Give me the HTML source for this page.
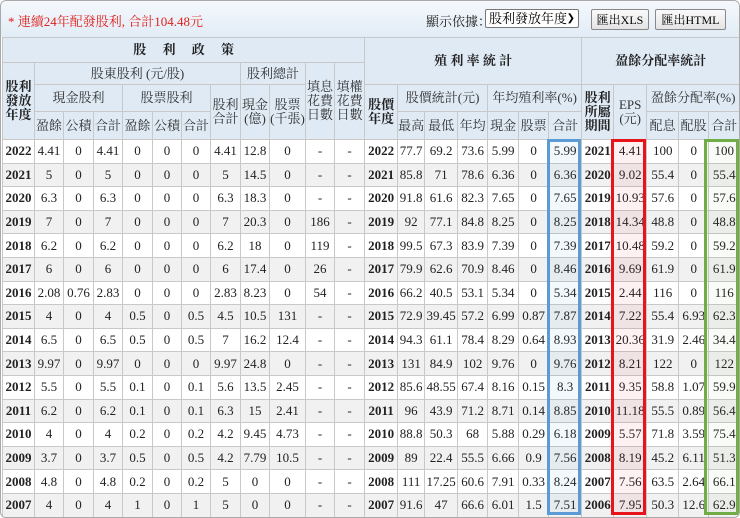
<!DOCTYPE html>
<html><head><meta charset="utf-8"><style>
body{margin:0;width:740px;height:518px;overflow:hidden;background:#fff;font-family:"Liberation Serif","Noto Serif CJK SC",serif;}
.wrap{position:absolute;left:0;top:0;width:738px;height:516px;border:1px solid #a9a9a9;border-radius:6px;overflow:hidden;background:#fff}
.bar{position:absolute;left:0;top:0;width:738px;height:36px;background:linear-gradient(#f4f8fc,#e2ecf6);}
.t1{position:absolute;left:7px;top:10px;color:#e0201c;font-size:13px;}
.lbl{position:absolute;left:425px;top:10px;font-size:13px;color:#222}
.sel{position:absolute;left:484px;top:8px;width:94px;height:19px;border:1px solid #777;background:#fff;font-size:13px;line-height:18px;padding-left:3px;box-sizing:border-box;border-radius:2px}
.sel span{position:absolute;right:3px;top:0;font-size:10px}
.btn{position:absolute;top:8px;height:21px;border:1px solid #888;background:linear-gradient(#fafafa,#e4e4e4);font-size:12px;line-height:20px;text-align:center;box-sizing:border-box;border-radius:2px}
table{position:absolute;left:1px;top:36px;border-collapse:collapse;table-layout:fixed;width:737px;font-size:13px;color:#222}
td,th{border:1px solid #c8c8c8;text-align:center;padding:0;overflow:hidden;white-space:nowrap}
th{background:#dfeaf5;font-weight:normal;line-height:14px;color:#333}
th.b{font-weight:bold;color:#222}
tr.d td{height:22.6px}
tr.d:nth-child(even) td{background:#f1f1f1}
td.y{font-weight:bold}
.box{position:absolute;top:138px;height:376px;border:3px solid;box-sizing:border-box}
</style></head><body>
<div class="wrap">
<div class="bar"></div>
<div class="t1">* 連續24年配發股利, 合計104.48元</div>
<div class="lbl">顯示依據：</div>
<div class="sel">股利發放年度<span>&#10095;</span></div>
<div class="btn" style="left:590px;width:58px">匯出XLS</div>
<div class="btn" style="left:654px;width:71px">匯出HTML</div>
<table>
<colgroup>
<col style="width:32px"><col style="width:29px"><col style="width:30px"><col style="width:29px"><col style="width:30px"><col style="width:29px"><col style="width:29px"><col style="width:30px"><col style="width:29px"><col style="width:36px"><col style="width:29px"><col style="width:30px">
<col style="width:33px"><col style="width:27px"><col style="width:33px"><col style="width:30px"><col style="width:31px"><col style="width:30px"><col style="width:33px"><col style="width:32px"><col style="width:33px"><col style="width:32px"><col style="width:30px"><col style="width:31px">
</colgroup>
<tr style="height:25px"><th class="b" colspan="12">股 &nbsp; &nbsp; 利 &nbsp; &nbsp; 政 &nbsp; &nbsp; 策</th><th class="b" colspan="7" rowspan="2">殖 利 率 統 計</th><th class="b" colspan="5" rowspan="2">盈餘分配率統計</th></tr>
<tr style="height:22px"><th class="b" rowspan="3">股利<br>發放<br>年度</th><th colspan="7">股東股利 (元/股)</th><th colspan="2">股利總計</th><th rowspan="3">填息<br>花費<br>日數</th><th rowspan="3">填權<br>花費<br>日數</th></tr>
<tr style="height:27px"><th colspan="3">現金股利</th><th colspan="3">股票股利</th><th rowspan="2">股利<br>合計</th><th rowspan="2">現金<br>(億)</th><th rowspan="2">股票<br>(千張)</th><th class="b" rowspan="2">股價<br>年度</th><th colspan="3">股價統計(元)</th><th colspan="3">年均殖利率(%)</th><th class="b" rowspan="2">股利<br>所屬<br>期間</th><th rowspan="2">EPS<br>(元)</th><th colspan="3">盈餘分配率(%)</th></tr>
<tr style="height:28px"><th>盈餘</th><th>公積</th><th>合計</th><th>盈餘</th><th>公積</th><th>合計</th><th>最高</th><th>最低</th><th>年均</th><th>現金</th><th>股票</th><th>合計</th><th>配息</th><th>配股</th><th>合計</th></tr>
<tr class="d"><td class="y">2022</td><td>4.41</td><td>0</td><td>4.41</td><td>0</td><td>0</td><td>0</td><td>4.41</td><td>12.8</td><td>0</td><td>-</td><td>-</td><td class="y">2022</td><td>77.7</td><td>69.2</td><td>73.6</td><td>5.99</td><td>0</td><td>5.99</td><td class="y">2021</td><td>4.41</td><td>100</td><td>0</td><td>100</td></tr>
<tr class="d"><td class="y">2021</td><td>5</td><td>0</td><td>5</td><td>0</td><td>0</td><td>0</td><td>5</td><td>14.5</td><td>0</td><td>-</td><td>-</td><td class="y">2021</td><td>85.8</td><td>71</td><td>78.6</td><td>6.36</td><td>0</td><td>6.36</td><td class="y">2020</td><td>9.02</td><td>55.4</td><td>0</td><td>55.4</td></tr>
<tr class="d"><td class="y">2020</td><td>6.3</td><td>0</td><td>6.3</td><td>0</td><td>0</td><td>0</td><td>6.3</td><td>18.3</td><td>0</td><td>-</td><td>-</td><td class="y">2020</td><td>91.8</td><td>61.6</td><td>82.3</td><td>7.65</td><td>0</td><td>7.65</td><td class="y">2019</td><td>10.93</td><td>57.6</td><td>0</td><td>57.6</td></tr>
<tr class="d"><td class="y">2019</td><td>7</td><td>0</td><td>7</td><td>0</td><td>0</td><td>0</td><td>7</td><td>20.3</td><td>0</td><td>186</td><td>-</td><td class="y">2019</td><td>92</td><td>77.1</td><td>84.8</td><td>8.25</td><td>0</td><td>8.25</td><td class="y">2018</td><td>14.34</td><td>48.8</td><td>0</td><td>48.8</td></tr>
<tr class="d"><td class="y">2018</td><td>6.2</td><td>0</td><td>6.2</td><td>0</td><td>0</td><td>0</td><td>6.2</td><td>18</td><td>0</td><td>119</td><td>-</td><td class="y">2018</td><td>99.5</td><td>67.3</td><td>83.9</td><td>7.39</td><td>0</td><td>7.39</td><td class="y">2017</td><td>10.48</td><td>59.2</td><td>0</td><td>59.2</td></tr>
<tr class="d"><td class="y">2017</td><td>6</td><td>0</td><td>6</td><td>0</td><td>0</td><td>0</td><td>6</td><td>17.4</td><td>0</td><td>26</td><td>-</td><td class="y">2017</td><td>79.9</td><td>62.6</td><td>70.9</td><td>8.46</td><td>0</td><td>8.46</td><td class="y">2016</td><td>9.69</td><td>61.9</td><td>0</td><td>61.9</td></tr>
<tr class="d"><td class="y">2016</td><td>2.08</td><td>0.76</td><td>2.83</td><td>0</td><td>0</td><td>0</td><td>2.83</td><td>8.23</td><td>0</td><td>54</td><td>-</td><td class="y">2016</td><td>66.2</td><td>40.5</td><td>53.1</td><td>5.34</td><td>0</td><td>5.34</td><td class="y">2015</td><td>2.44</td><td>116</td><td>0</td><td>116</td></tr>
<tr class="d"><td class="y">2015</td><td>4</td><td>0</td><td>4</td><td>0.5</td><td>0</td><td>0.5</td><td>4.5</td><td>10.5</td><td>131</td><td>-</td><td>-</td><td class="y">2015</td><td>72.9</td><td>39.45</td><td>57.2</td><td>6.99</td><td>0.87</td><td>7.87</td><td class="y">2014</td><td>7.22</td><td>55.4</td><td>6.93</td><td>62.3</td></tr>
<tr class="d"><td class="y">2014</td><td>6.5</td><td>0</td><td>6.5</td><td>0.5</td><td>0</td><td>0.5</td><td>7</td><td>16.2</td><td>12.4</td><td>-</td><td>-</td><td class="y">2014</td><td>94.3</td><td>61.1</td><td>78.4</td><td>8.29</td><td>0.64</td><td>8.93</td><td class="y">2013</td><td>20.36</td><td>31.9</td><td>2.46</td><td>34.4</td></tr>
<tr class="d"><td class="y">2013</td><td>9.97</td><td>0</td><td>9.97</td><td>0</td><td>0</td><td>0</td><td>9.97</td><td>24.8</td><td>0</td><td>-</td><td>-</td><td class="y">2013</td><td>131</td><td>84.9</td><td>102</td><td>9.76</td><td>0</td><td>9.76</td><td class="y">2012</td><td>8.21</td><td>122</td><td>0</td><td>122</td></tr>
<tr class="d"><td class="y">2012</td><td>5.5</td><td>0</td><td>5.5</td><td>0.1</td><td>0</td><td>0.1</td><td>5.6</td><td>13.5</td><td>2.45</td><td>-</td><td>-</td><td class="y">2012</td><td>85.6</td><td>48.55</td><td>67.4</td><td>8.16</td><td>0.15</td><td>8.3</td><td class="y">2011</td><td>9.35</td><td>58.8</td><td>1.07</td><td>59.9</td></tr>
<tr class="d"><td class="y">2011</td><td>6.2</td><td>0</td><td>6.2</td><td>0.1</td><td>0</td><td>0.1</td><td>6.3</td><td>15</td><td>2.41</td><td>-</td><td>-</td><td class="y">2011</td><td>96</td><td>43.9</td><td>71.2</td><td>8.71</td><td>0.14</td><td>8.85</td><td class="y">2010</td><td>11.18</td><td>55.5</td><td>0.89</td><td>56.4</td></tr>
<tr class="d"><td class="y">2010</td><td>4</td><td>0</td><td>4</td><td>0.2</td><td>0</td><td>0.2</td><td>4.2</td><td>9.45</td><td>4.73</td><td>-</td><td>-</td><td class="y">2010</td><td>88.8</td><td>50.3</td><td>68</td><td>5.88</td><td>0.29</td><td>6.18</td><td class="y">2009</td><td>5.57</td><td>71.8</td><td>3.59</td><td>75.4</td></tr>
<tr class="d"><td class="y">2009</td><td>3.7</td><td>0</td><td>3.7</td><td>0.5</td><td>0</td><td>0.5</td><td>4.2</td><td>7.79</td><td>10.5</td><td>-</td><td>-</td><td class="y">2009</td><td>89</td><td>22.4</td><td>55.5</td><td>6.66</td><td>0.9</td><td>7.56</td><td class="y">2008</td><td>8.19</td><td>45.2</td><td>6.11</td><td>51.3</td></tr>
<tr class="d"><td class="y">2008</td><td>4.8</td><td>0</td><td>4.8</td><td>0.2</td><td>0</td><td>0.2</td><td>5</td><td>0</td><td>0</td><td>-</td><td>-</td><td class="y">2008</td><td>111</td><td>17.25</td><td>60.6</td><td>7.91</td><td>0.33</td><td>8.24</td><td class="y">2007</td><td>7.56</td><td>63.5</td><td>2.64</td><td>66.1</td></tr>
<tr class="d"><td class="y">2007</td><td>4</td><td>0</td><td>4</td><td>1</td><td>0</td><td>1</td><td>5</td><td>0</td><td>0</td><td>-</td><td>-</td><td class="y">2007</td><td>91.6</td><td>47</td><td>66.6</td><td>6.01</td><td>1.5</td><td>7.51</td><td class="y">2006</td><td>7.95</td><td>50.3</td><td>12.6</td><td>62.9</td></tr>
</table>
<div class="box" style="left:546px;width:34px;border-color:#5b9bd5;background:rgba(91,155,213,0.07)"></div>
<div class="box" style="left:610px;width:35px;border-color:#e8141c;background:rgba(232,20,28,0.06)"></div>
<div class="box" style="left:703px;width:35px;border-color:#70ad47;background:rgba(112,173,71,0.05)"></div>
</div>
</body></html>
